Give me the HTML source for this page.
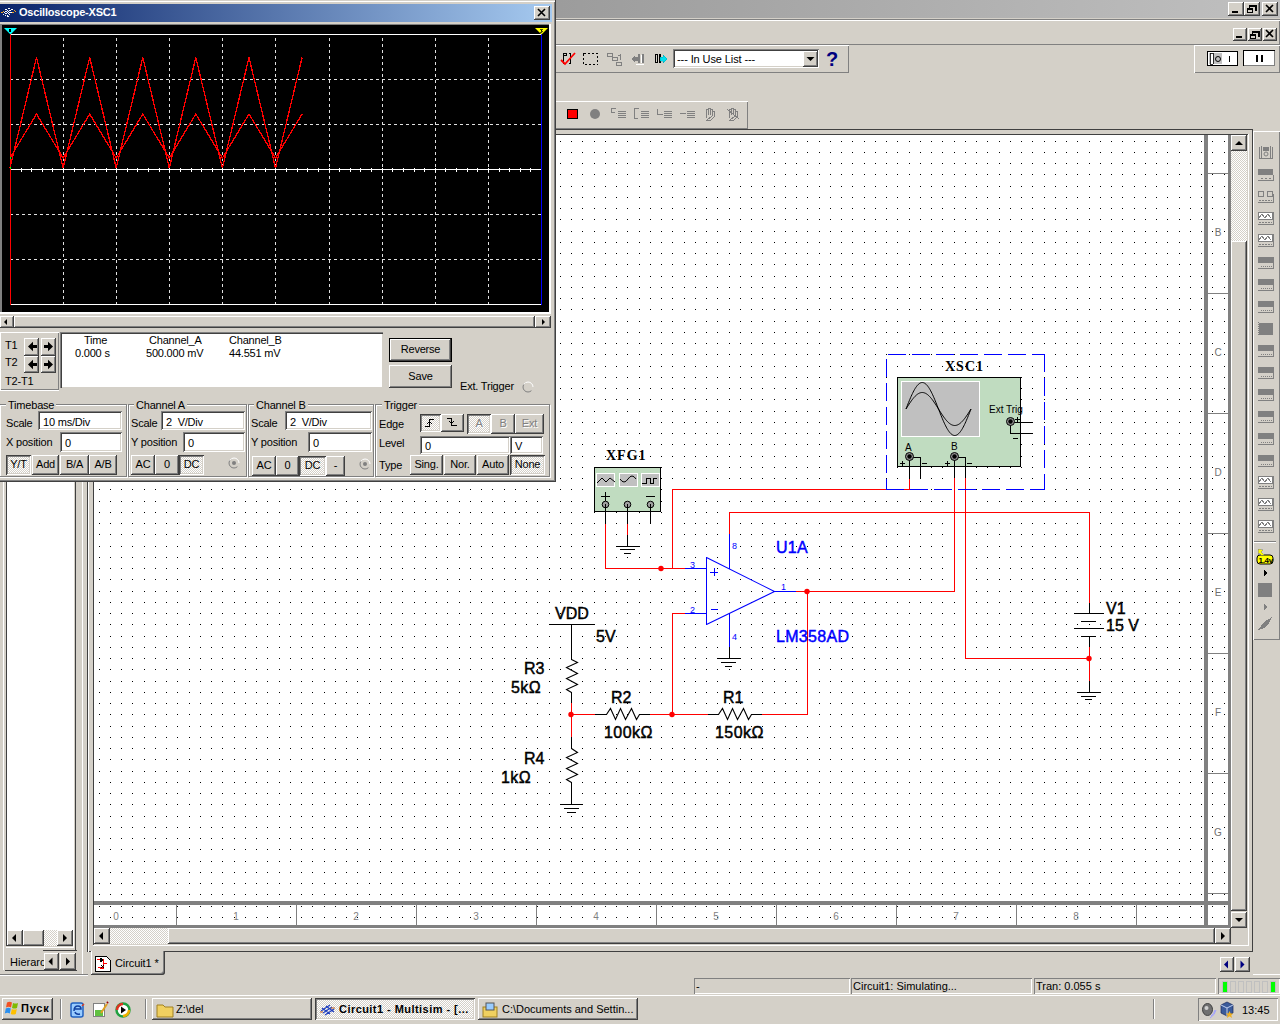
<!DOCTYPE html><html><head><meta charset="utf-8"><title>Multisim</title><style>
*{margin:0;padding:0;box-sizing:border-box}
html,body{width:1280px;height:1024px;overflow:hidden;background:#d4d0c8;font-family:"Liberation Sans",sans-serif;font-size:11px;color:#000;position:relative}
.a{position:absolute}
.bt{position:absolute;background:#d4d0c8;box-shadow:inset -1px -1px #404040,inset 1px 1px #fff,inset -2px -2px #808080;text-align:center;white-space:nowrap}
.bp{position:absolute;background:repeating-conic-gradient(#fff 0 25%,#d4d0c8 0 50%) 0 0/2px 2px;box-shadow:inset 1px 1px #404040,inset -1px -1px #fff,inset 2px 2px #808080,inset -2px -2px #d4d0c8;text-align:center;white-space:nowrap}
.ed{position:absolute;background:#fff;box-shadow:inset 1px 1px #808080,inset -1px -1px #fff,inset 2px 2px #404040,inset -2px -2px #d4d0c8;white-space:nowrap}
.sk{position:absolute;box-shadow:inset 1px 1px #808080,inset -1px -1px #fff}
.rs{position:absolute;box-shadow:inset 1px 1px #fff,inset -1px -1px #808080}
.dith{background:repeating-conic-gradient(#fff 0 25%,#d4d0c8 0 50%) 0 0/2px 2px}
.t{position:absolute;white-space:nowrap;line-height:1}
svg{position:absolute;overflow:visible}
</style></head><body>
<div class="a" style="left:0px;top:0px;width:1280px;height:18px;background:linear-gradient(90deg,#808080,#c0c0c0)"></div>
<div class="a" style="left:0px;top:19px;width:1280px;height:1px;background:#808080"></div>
<div class="a" style="left:0px;top:20px;width:1280px;height:1px;background:#fff"></div>
<div class="a" style="left:0px;top:44px;width:1280px;height:1px;background:#808080"></div>
<div class="a" style="left:1279px;top:21px;width:1px;height:52px;background:#808080"></div>
<div class="bt" style="left:1228px;top:2px;width:16px;height:14px"><div class="a" style="left:4px;top:9px;width:6px;height:2px;background:#000"></div></div>
<div class="bt" style="left:1244px;top:2px;width:16px;height:14px"><svg width="16" height="14" style="left:0;top:0" shape-rendering="crispEdges"><path d="M6 3h6v5h-1 M6 4h6" stroke="#000" fill="none"/><rect x="3.5" y="6.5" width="5" height="4" stroke="#000" fill="none"/><path d="M4 7.5h5" stroke="#000"/><path d="M5.5 3v2.5 M11.5 3v5.5" stroke="#000"/></svg></div>
<div class="bt" style="left:1262px;top:2px;width:16px;height:14px"><svg width="16" height="14" style="left:0;top:0"><path d="M4 3L11 10M11 3L4 10" stroke="#000" stroke-width="1.6"/></svg></div>
<div class="bt" style="left:1233px;top:28px;width:14px;height:13px"><div class="a" style="left:3px;top:8px;width:6px;height:2px;background:#000"></div></div>
<div class="bt" style="left:1248px;top:28px;width:14px;height:13px"><svg width="14" height="13" style="left:0;top:0" shape-rendering="crispEdges"><path d="M5 3h6v5h-1 M5 4h6" stroke="#000" fill="none"/><rect x="2.5" y="6.5" width="5" height="4" stroke="#000" fill="none"/><path d="M3 7.5h5" stroke="#000"/><path d="M4.5 3v2.5 M10.5 3v5.5" stroke="#000"/></svg></div>
<div class="bt" style="left:1263px;top:28px;width:14px;height:13px"><svg width="14" height="13" style="left:0;top:0"><path d="M3 2L10 9M10 2L3 9" stroke="#000" stroke-width="1.6"/></svg></div>
<div class="rs" style="left:540px;top:45px;width:309px;height:28px;"></div>
<div class="rs" style="left:1194px;top:45px;width:86px;height:28px;"></div>
<div class="rs" style="left:540px;top:101px;width:208px;height:28px;"></div>
<div class="ed" style="left:673px;top:49px;width:146px;height:19px;"><div class="t" style="left:4px;top:5px;font-size:11px;color:#000;letter-spacing:-0.1px">--- In Use List ---</div></div>
<div class="bt" style="left:803px;top:51px;width:15px;height:16px;"><svg width="15" height="16" style="left:0;top:0"><path d="M3.5 6h8l-4 4z" fill="#000"/></svg></div>
<div class="t" style="left:826px;top:49px;font-size:20px;color:#000080;font-weight:bold">?</div>
<svg width="300" height="30" style="left:550px;top:45px" shape-rendering="crispEdges">
<path d="M15.5 8h-2v10h2 M18.5 8h2v10h-2 M13 8h3v2h-3z" stroke="#000" fill="none"/>
<path d="M11 15l4 4l10-11" stroke="#f00" stroke-width="1.8" fill="none" shape-rendering="auto"/>
<rect x="33.5" y="8.5" width="14" height="11" stroke="#000" stroke-dasharray="2 2" fill="none"/>
<path d="M57.5 8.5h5v3h-5z M62.5 12.5h5v3h-5z M66.5 17.5h5v3h-5z M70 9v6 M68 10h2" stroke="#808080" fill="none"/>
<path d="M81 14l4-4v8z M85 12h4v4h-4z M88 9h2v9h-2z M92 9h2v9h-2z" fill="#808080"/>
<path d="M91 10v8 M86 19h8" stroke="#fff"/>
<path d="M105.5 9.5h2v8h-2z M109.5 9.5h1v8h-1z" stroke="#000" fill="none"/>
<path d="M110 12h3v-2l4 4l-4 4v-2h-3z" fill="#00e0f0" stroke="#008090" stroke-width="0.3"/>
</svg>
<svg width="200" height="30" style="left:550px;top:101px" shape-rendering="crispEdges">
<rect x="17.5" y="8.5" width="10" height="9" fill="#f00" stroke="#000"/>
<circle cx="45" cy="13" r="5" fill="#808080" shape-rendering="auto"/>
<g stroke="#808080" fill="none">
<path d="M61 7h5 M61 7v4h4 M68 10h8 M68 12h8 M68 14h8 M68 16h8"/>
<path d="M84 7h5 M84 7v10h4 M91 10h8 M91 12h8 M91 14h8 M91 16h8"/>
<path d="M107 8v5h6 M114 10h8 M114 12h8 M114 14h8 M114 16h8"/>
<path d="M130 12h6 M137 10h8 M137 12h8 M137 14h8 M137 16h8"/>
<path d="M156 17v-9h2v6 M158 14v-7h2v7 M160 14v-6h2v6 M162 15v-5h2v6l-3 3h-4z"/>
<path d="M179 17v-9h2v6 M181 14v-7h2v7 M183 14v-6h2v6 M185 15v-5h2v6l-3 3h-4z M177 8l12 10"/>
</g></svg>
<svg width="80" height="24" style="left:1200px;top:48px" shape-rendering="crispEdges">
<rect x="7.5" y="3.5" width="30" height="14" fill="#fff" stroke="#000"/>
<rect x="9" y="5" width="13" height="11" fill="#c0c0c0"/>
<path d="M10 16v-11h3v11z" fill="#fff" stroke="#000" stroke-width="0.8"/>
<circle cx="18" cy="11" r="2.5" fill="none" stroke="#000" shape-rendering="auto"/>
<path d="M29 8v6" stroke="#000" stroke-width="1"/>
<rect x="43.5" y="2.5" width="31" height="15" fill="#fff" stroke="#000"/>
<path d="M44 17h30v-14" stroke="#808080" fill="none"/>
<path d="M56 7v7 M57 7v7 M61 7v7 M62 7v7" stroke="#000"/>
</svg>
<div class="a" style="left:87px;top:129px;width:1166px;height:1px;background:#404040"></div>
<div class="a" style="left:87px;top:129px;width:1px;height:823px;background:#808080"></div>
<div class="a" style="left:88px;top:130px;width:1px;height:821px;background:#fff"></div>
<div class="a" style="left:87px;top:951px;width:1166px;height:1px;background:#404040"></div>
<div class="a" style="left:1252px;top:129px;width:1px;height:823px;background:#404040"></div>
<div class="a" style="left:93px;top:134px;width:1155px;height:1px;background:#404040"></div>
<div class="a" style="left:93px;top:134px;width:1px;height:811px;background:#404040"></div>
<div class="a" style="left:93px;top:945px;width:1156px;height:1px;background:#fff"></div>
<div class="a" style="left:1248px;top:134px;width:1px;height:812px;background:#fff"></div>
<svg width="1280" height="1024" style="left:0;top:0" shape-rendering="crispEdges" font-family="Liberation Sans, sans-serif"><defs><pattern id="dp" patternUnits="userSpaceOnUse" x="20" y="6" width="45" height="45"><rect x="0" y="0" width="1" height="1" fill="#000"/><rect x="0" y="11" width="1" height="1" fill="#000"/><rect x="0" y="22" width="1" height="1" fill="#000"/><rect x="0" y="33" width="1" height="1" fill="#000"/><rect x="11" y="0" width="1" height="1" fill="#000"/><rect x="11" y="11" width="1" height="1" fill="#000"/><rect x="11" y="22" width="1" height="1" fill="#000"/><rect x="11" y="33" width="1" height="1" fill="#000"/><rect x="22" y="0" width="1" height="1" fill="#000"/><rect x="22" y="11" width="1" height="1" fill="#000"/><rect x="22" y="22" width="1" height="1" fill="#000"/><rect x="22" y="33" width="1" height="1" fill="#000"/><rect x="34" y="0" width="1" height="1" fill="#000"/><rect x="34" y="11" width="1" height="1" fill="#000"/><rect x="34" y="22" width="1" height="1" fill="#000"/><rect x="34" y="33" width="1" height="1" fill="#000"/></pattern></defs><rect x="94" y="135" width="1110" height="766" fill="#fff"/><rect x="94" y="135" width="1110" height="766" fill="url(#dp)"/><rect x="1208" y="135" width="20" height="790" fill="#fff"/><rect x="1208" y="135" width="20" height="790" fill="url(#dp)"/><rect x="94" y="905" width="1110" height="20" fill="#fff"/><rect x="94" y="905" width="1110" height="20" fill="url(#dp)"/><rect x="1204" y="135" width="4" height="793" fill="#808080"/><rect x="94" y="901" width="1137" height="4" fill="#808080"/><rect x="1228" y="135" width="3" height="793" fill="#808080"/><rect x="94" y="925" width="1137" height="3" fill="#808080"/><rect x="1208" y="173" width="20" height="1" fill="#808080"/><rect x="1208" y="293" width="20" height="1" fill="#808080"/><rect x="1208" y="413" width="20" height="1" fill="#808080"/><rect x="1208" y="533" width="20" height="1" fill="#808080"/><rect x="1208" y="653" width="20" height="1" fill="#808080"/><rect x="1208" y="773" width="20" height="1" fill="#808080"/><rect x="1208" y="893" width="20" height="1" fill="#808080"/><text x="1218" y="236" font-size="10" fill="#707070" text-anchor="middle">B</text><text x="1218" y="356" font-size="10" fill="#707070" text-anchor="middle">C</text><text x="1218" y="476" font-size="10" fill="#707070" text-anchor="middle">D</text><text x="1218" y="596" font-size="10" fill="#707070" text-anchor="middle">E</text><text x="1218" y="716" font-size="10" fill="#707070" text-anchor="middle">F</text><text x="1218" y="836" font-size="10" fill="#707070" text-anchor="middle">G</text><rect x="176" y="905" width="1" height="20" fill="#808080"/><rect x="296" y="905" width="1" height="20" fill="#808080"/><rect x="416" y="905" width="1" height="20" fill="#808080"/><rect x="536" y="905" width="1" height="20" fill="#808080"/><rect x="656" y="905" width="1" height="20" fill="#808080"/><rect x="776" y="905" width="1" height="20" fill="#808080"/><rect x="896" y="905" width="1" height="20" fill="#808080"/><rect x="1016" y="905" width="1" height="20" fill="#808080"/><rect x="1136" y="905" width="1" height="20" fill="#808080"/><text x="116" y="920" font-size="10" fill="#808080" text-anchor="middle">0</text><text x="236" y="920" font-size="10" fill="#808080" text-anchor="middle">1</text><text x="356" y="920" font-size="10" fill="#808080" text-anchor="middle">2</text><text x="476" y="920" font-size="10" fill="#808080" text-anchor="middle">3</text><text x="596" y="920" font-size="10" fill="#808080" text-anchor="middle">4</text><text x="716" y="920" font-size="10" fill="#808080" text-anchor="middle">5</text><text x="836" y="920" font-size="10" fill="#808080" text-anchor="middle">6</text><text x="956" y="920" font-size="10" fill="#808080" text-anchor="middle">7</text><text x="1076" y="920" font-size="10" fill="#808080" text-anchor="middle">8</text><rect x="605" y="524" width="1" height="45" fill="#ff0000"/><rect x="605" y="568" width="80" height="1" fill="#ff0000"/><rect x="672" y="489" width="1" height="80" fill="#ff0000"/><rect x="672" y="489" width="238" height="1" fill="#ff0000"/><rect x="909" y="479" width="1" height="11" fill="#ff0000"/><rect x="627" y="524" width="1" height="11" fill="#ff0000"/><rect x="672" y="613" width="1" height="102" fill="#ff0000"/><rect x="672" y="613" width="13" height="1" fill="#ff0000"/><rect x="729" y="512" width="1" height="22" fill="#ff0000"/><rect x="729" y="512" width="361" height="1" fill="#ff0000"/><rect x="1089" y="512" width="1" height="91" fill="#ff0000"/><rect x="796" y="591" width="159" height="1" fill="#ff0000"/><rect x="954" y="478" width="1" height="114" fill="#ff0000"/><rect x="807" y="591" width="1" height="124" fill="#ff0000"/><rect x="762" y="714" width="46" height="1" fill="#ff0000"/><rect x="965" y="478" width="1" height="181" fill="#ff0000"/><rect x="965" y="658" width="125" height="1" fill="#ff0000"/><rect x="1089" y="647" width="1" height="34" fill="#ff0000"/><rect x="571" y="703" width="1" height="34" fill="#ff0000"/><rect x="571" y="714" width="24" height="1" fill="#ff0000"/><rect x="650" y="714" width="58" height="1" fill="#ff0000"/><path d="M888 354.5H1045" stroke="#0000ff" stroke-dasharray="18 6"/><path d="M886 489.5H1045" stroke="#0000ff" stroke-dasharray="18 6"/><path d="M886.5 359V490" stroke="#0000ff" stroke-dasharray="18 6"/><path d="M1044.5 354V490" stroke="#0000ff" stroke-dasharray="18 6"/><circle cx="661" cy="568.5" r="2.7" fill="#ff0000" shape-rendering="auto"/><circle cx="807" cy="591.5" r="2.7" fill="#ff0000" shape-rendering="auto"/><circle cx="571" cy="714.5" r="2.7" fill="#ff0000" shape-rendering="auto"/><circle cx="672" cy="714.5" r="2.7" fill="#ff0000" shape-rendering="auto"/><circle cx="1089" cy="658.5" r="2.7" fill="#ff0000" shape-rendering="auto"/><path d="M706.5 557.5 L774.5 591.5 L706.5 624.5" stroke="#0000ff" fill="none" shape-rendering="auto" stroke-width="1.1"/><rect x="706" y="557" width="1" height="68" fill="#0000ff"/><rect x="685" y="568" width="22" height="1" fill="#0000ff"/><rect x="685" y="613" width="22" height="1" fill="#0000ff"/><rect x="775" y="591" width="21" height="1" fill="#0000ff"/><rect x="729" y="534" width="1" height="35" fill="#0000ff"/><rect x="729" y="614" width="1" height="33" fill="#0000ff"/><rect x="710" y="572" width="8" height="1" fill="#0000ff"/><rect x="714" y="568" width="1" height="8" fill="#0000ff"/><rect x="711" y="609" width="7" height="1" fill="#0000ff"/><text x="690" y="568" font-size="9" fill="#0000ff">3</text><text x="690" y="613" font-size="9" fill="#0000ff">2</text><text x="732" y="549" font-size="9" fill="#0000ff">8</text><text x="732" y="640" font-size="9" fill="#0000ff">4</text><text x="781" y="590" font-size="9" fill="#0000ff">1</text><text x="776" y="553" font-size="16" fill="#0000ff" stroke="#0000ff" stroke-width="0.45" letter-spacing="0.3">U1A</text><text x="776" y="642" font-size="16" fill="#0000ff" stroke="#0000ff" stroke-width="0.45" letter-spacing="0.3">LM358AD</text><rect x="729" y="647" width="1" height="12" fill="#000"/><rect x="717" y="658" width="24" height="1" fill="#000"/><rect x="721" y="662" width="15" height="1" fill="#000"/><rect x="725" y="666" width="7" height="1" fill="#000"/><rect x="627" y="535" width="1" height="12" fill="#000"/><rect x="616" y="546" width="24" height="1" fill="#000"/><rect x="620" y="549" width="15" height="1" fill="#000"/><rect x="624" y="553" width="7" height="1" fill="#000"/><rect x="571" y="782" width="1" height="23" fill="#000"/><rect x="560" y="804" width="23" height="1" fill="#000"/><rect x="564" y="808" width="15" height="1" fill="#000"/><rect x="567" y="812" width="9" height="1" fill="#000"/><rect x="1089" y="681" width="1" height="12" fill="#000"/><rect x="1077" y="692" width="24" height="1" fill="#000"/><rect x="1081" y="696" width="15" height="1" fill="#000"/><rect x="1085" y="699" width="7" height="1" fill="#000"/><rect x="605" y="504" width="1" height="20" fill="#000"/><rect x="627" y="504" width="1" height="20" fill="#000"/><rect x="650" y="504" width="1" height="20" fill="#000"/><rect x="549" y="624" width="46" height="1" fill="#000"/><rect x="571" y="624" width="1" height="36" fill="#000"/><rect x="571" y="692" width="1" height="11" fill="#000"/><path d="M571.5 659.5 L577.5 662.5 L566.5 667.5 L577.5 673.5 L566.5 678.5 L577.5 684.5 L566.5 689.5 L571.5 692.5" stroke="#000" fill="none" shape-rendering="auto" stroke-width="1.1"/><rect x="571" y="737" width="1" height="12" fill="#000"/><path d="M571.5 748.5 L577.5 752.5 L566.5 757.5 L577.5 763.5 L566.5 768.5 L577.5 774.5 L566.5 779.5 L571.5 782.5" stroke="#000" fill="none" shape-rendering="auto" stroke-width="1.1"/><rect x="595" y="714" width="12" height="1" fill="#000"/><rect x="639" y="714" width="11" height="1" fill="#000"/><path d="M606.5 714.5 L610.5 708.5 L615.5 719.5 L620.5 708.5 L625.5 719.5 L631.5 708.5 L636.5 719.5 L639.5 714.5" stroke="#000" fill="none" shape-rendering="auto" stroke-width="1.1"/><rect x="708" y="714" width="11" height="1" fill="#000"/><rect x="751" y="714" width="11" height="1" fill="#000"/><path d="M718.5 714.5 L722.5 708.5 L727.5 719.5 L732.5 708.5 L737.5 719.5 L743.5 708.5 L748.5 719.5 L751.5 714.5" stroke="#000" fill="none" shape-rendering="auto" stroke-width="1.1"/><rect x="1089" y="603" width="1" height="11" fill="#000"/><rect x="1074" y="613" width="30" height="1" fill="#000"/><rect x="1081" y="621" width="15" height="1" fill="#000"/><rect x="1074" y="628" width="30" height="1" fill="#000"/><rect x="1081" y="636" width="15" height="1" fill="#000"/><rect x="1089" y="636" width="1" height="11" fill="#000"/><text x="555" y="619" font-size="16" fill="#000" stroke="#000" stroke-width="0.45">VDD</text><text x="596" y="642" font-size="16" fill="#000" stroke="#000" stroke-width="0.45">5V</text><text x="524" y="674" font-size="16" fill="#000" stroke="#000" stroke-width="0.45">R3</text><text x="511" y="693" font-size="16" fill="#000" stroke="#000" stroke-width="0.45" letter-spacing="0.45">5kΩ</text><text x="611" y="703" font-size="16" fill="#000" stroke="#000" stroke-width="0.45">R2</text><text x="604" y="738" font-size="16" fill="#000" stroke="#000" stroke-width="0.45" letter-spacing="0.45">100kΩ</text><text x="723" y="703" font-size="16" fill="#000" stroke="#000" stroke-width="0.45">R1</text><text x="715" y="738" font-size="16" fill="#000" stroke="#000" stroke-width="0.45" letter-spacing="0.45">150kΩ</text><text x="524" y="764" font-size="16" fill="#000" stroke="#000" stroke-width="0.45">R4</text><text x="501" y="783" font-size="16" fill="#000" stroke="#000" stroke-width="0.45" letter-spacing="0.45">1kΩ</text><text x="1106" y="614" font-size="16" fill="#000" stroke="#000" stroke-width="0.45">V1</text><text x="1106" y="631" font-size="16" fill="#000" stroke="#000" stroke-width="0.45">15 V</text><rect x="594.5" y="467.5" width="66" height="44" fill="#c0dcc0" stroke="#000"/><rect x="596" y="473" width="19" height="14" fill="#fff"/><rect x="597" y="474" width="17" height="12" fill="#c0c0c0"/><rect x="619" y="473" width="19" height="14" fill="#fff"/><rect x="620" y="474" width="17" height="12" fill="#c0c0c0"/><rect x="641" y="473" width="19" height="14" fill="#fff"/><rect x="642" y="474" width="17" height="12" fill="#c0c0c0"/><path d="M597 483l5-5l4 4l4-4l5 4" stroke="#000" fill="none" shape-rendering="auto"/><path d="M620 479q4 6 8 0t8 0" stroke="#000" fill="none" shape-rendering="auto"/><path d="M642 483h4v-5h4v5h3v-5h4" stroke="#000" fill="none"/><rect x="601" y="496" width="9" height="1" fill="#000"/><rect x="605" y="492" width="1" height="9" fill="#000"/><rect x="646" y="496" width="9" height="1" fill="#000"/><circle cx="605.5" cy="504.5" r="3.3" fill="#a0a0a0" stroke="#000" shape-rendering="auto"/><circle cx="627.5" cy="504.5" r="3.3" fill="#a0a0a0" stroke="#000" shape-rendering="auto"/><circle cx="650.5" cy="504.5" r="3.3" fill="#a0a0a0" stroke="#000" shape-rendering="auto"/><rect x="605" y="504" width="1" height="8" fill="#000"/><rect x="627" y="504" width="1" height="8" fill="#000"/><rect x="650" y="504" width="1" height="8" fill="#000"/><text x="606" y="460" font-size="14" font-weight="bold" letter-spacing="1" font-family="Liberation Serif, serif" fill="#000">XFG1</text><rect x="897.5" y="377.5" width="123" height="89" fill="#c0dcc0" stroke="#000"/><rect x="901" y="381" width="79" height="56" fill="#fff"/><rect x="902" y="382" width="77" height="54" fill="#c0c0c0"/><path d="M906.00 409.00 L906.65 407.34 L907.30 405.68 L907.95 404.03 L908.60 402.41 L909.25 400.81 L909.90 399.24 L910.55 397.72 L911.20 396.23 L911.85 394.80 L912.50 393.42 L913.15 392.11 L913.80 390.86 L914.45 389.68 L915.10 388.58 L915.75 387.56 L916.40 386.63 L917.05 385.78 L917.70 385.02 L918.35 384.36 L919.00 383.80 L919.65 383.33 L920.30 382.97 L920.95 382.71 L921.60 382.55 L922.25 382.50 L922.90 382.55 L923.55 382.71 L924.20 382.97 L924.85 383.33 L925.50 383.80 L926.15 384.36 L926.80 385.02 L927.45 385.78 L928.10 386.63 L928.75 387.56 L929.40 388.58 L930.05 389.68 L930.70 390.86 L931.35 392.11 L932.00 393.42 L932.65 394.80 L933.30 396.23 L933.95 397.72 L934.60 399.24 L935.25 400.81 L935.90 402.41 L936.55 404.03 L937.20 405.68 L937.85 407.34 L938.50 409.00 L939.15 410.66 L939.80 412.32 L940.45 413.97 L941.10 415.59 L941.75 417.19 L942.40 418.76 L943.05 420.28 L943.70 421.77 L944.35 423.20 L945.00 424.58 L945.65 425.89 L946.30 427.14 L946.95 428.32 L947.60 429.42 L948.25 430.44 L948.90 431.37 L949.55 432.22 L950.20 432.98 L950.85 433.64 L951.50 434.20 L952.15 434.67 L952.80 435.03 L953.45 435.29 L954.10 435.45 L954.75 435.50 L955.40 435.45 L956.05 435.29 L956.70 435.03 L957.35 434.67 L958.00 434.20 L958.65 433.64 L959.30 432.98 L959.95 432.22 L960.60 431.37 L961.25 430.44 L961.90 429.42 L962.55 428.32 L963.20 427.14 L963.85 425.89 L964.50 424.58 L965.15 423.20 L965.80 421.77 L966.45 420.28 L967.10 418.76 L967.75 417.19 L968.40 415.59 L969.05 413.97 L969.70 412.32 L970.35 410.66 L971.00 409.00" stroke="#000" fill="none" shape-rendering="auto"/><path d="M906.00 409.00 L906.65 407.96 L907.30 406.93 L907.95 405.91 L908.60 404.90 L909.25 403.90 L909.90 402.93 L910.55 401.97 L911.20 401.05 L911.85 400.16 L912.50 399.30 L913.15 398.48 L913.80 397.70 L914.45 396.97 L915.10 396.29 L915.75 395.65 L916.40 395.07 L917.05 394.54 L917.70 394.07 L918.35 393.66 L919.00 393.31 L919.65 393.02 L920.30 392.79 L920.95 392.63 L921.60 392.53 L922.25 392.50 L922.90 392.53 L923.55 392.63 L924.20 392.79 L924.85 393.02 L925.50 393.31 L926.15 393.66 L926.80 394.07 L927.45 394.54 L928.10 395.07 L928.75 395.65 L929.40 396.29 L930.05 396.97 L930.70 397.70 L931.35 398.48 L932.00 399.30 L932.65 400.16 L933.30 401.05 L933.95 401.97 L934.60 402.93 L935.25 403.90 L935.90 404.90 L936.55 405.91 L937.20 406.93 L937.85 407.96 L938.50 409.00 L939.15 410.04 L939.80 411.07 L940.45 412.09 L941.10 413.10 L941.75 414.10 L942.40 415.07 L943.05 416.03 L943.70 416.95 L944.35 417.84 L945.00 418.70 L945.65 419.52 L946.30 420.30 L946.95 421.03 L947.60 421.71 L948.25 422.35 L948.90 422.93 L949.55 423.46 L950.20 423.93 L950.85 424.34 L951.50 424.69 L952.15 424.98 L952.80 425.21 L953.45 425.37 L954.10 425.47 L954.75 425.50 L955.40 425.47 L956.05 425.37 L956.70 425.21 L957.35 424.98 L958.00 424.69 L958.65 424.34 L959.30 423.93 L959.95 423.46 L960.60 422.93 L961.25 422.35 L961.90 421.71 L962.55 421.03 L963.20 420.30 L963.85 419.52 L964.50 418.70 L965.15 417.84 L965.80 416.95 L966.45 416.03 L967.10 415.07 L967.75 414.10 L968.40 413.10 L969.05 412.09 L969.70 411.07 L970.35 410.04 L971.00 409.00" stroke="#000" fill="none" shape-rendering="auto"/><text x="945" y="371" font-size="14" font-weight="bold" letter-spacing="1" font-family="Liberation Serif, serif" fill="#000">XSC1</text><text x="989" y="413" font-size="10" fill="#000">Ext Trig</text><text x="905" y="451" font-size="10" fill="#000">A</text><text x="951" y="450" font-size="10" fill="#000">B</text><rect x="909" y="456" width="1" height="23" fill="#000"/><rect x="909" y="457" width="12" height="1" fill="#000"/><rect x="920" y="457" width="1" height="22" fill="#000"/><rect x="954" y="456" width="1" height="22" fill="#000"/><rect x="954" y="457" width="12" height="1" fill="#000"/><rect x="965" y="457" width="1" height="21" fill="#000"/><rect x="1010" y="422" width="23" height="1" fill="#000"/><rect x="1010" y="422" width="1" height="12" fill="#000"/><rect x="1010" y="433" width="23" height="1" fill="#000"/><circle cx="909.5" cy="456.5" r="4" fill="#909090" stroke="#000" shape-rendering="auto"/><circle cx="909.5" cy="456.5" r="2.2" fill="#000" shape-rendering="auto"/><circle cx="954.5" cy="456.5" r="4" fill="#909090" stroke="#000" shape-rendering="auto"/><circle cx="954.5" cy="456.5" r="2.2" fill="#000" shape-rendering="auto"/><circle cx="1010.5" cy="421.5" r="4" fill="#909090" stroke="#000" shape-rendering="auto"/><circle cx="1010.5" cy="421.5" r="2.2" fill="#000" shape-rendering="auto"/><rect x="900" y="463" width="5" height="1" fill="#000"/><rect x="902" y="461" width="1" height="5" fill="#000"/><rect x="922" y="463" width="5" height="1" fill="#000"/><rect x="945" y="463" width="5" height="1" fill="#000"/><rect x="947" y="461" width="1" height="5" fill="#000"/><rect x="967" y="463" width="5" height="1" fill="#000"/><rect x="1015" y="419" width="5" height="1" fill="#000"/><rect x="1017" y="417" width="1" height="5" fill="#000"/><rect x="1013" y="438" width="5" height="1" fill="#000"/></svg>
<div class="a" style="left:1231px;top:135px;width:17px;height:793px;background:#d4d0c8"></div>
<div class="a" style="left:1231px;top:151px;width:16px;height:90px;background:repeating-conic-gradient(#fff 0 25%,#d4d0c8 0 50%) 0 0/2px 2px"></div>
<div class="bt" style="left:1231px;top:241px;width:16px;height:670px;"></div>
<div class="bt" style="left:1231px;top:135px;width:16px;height:16px"><svg width="16" height="16" style="left:0;top:0"><path d="M4.0 10.0h8l-4-4z" fill="#000"/></svg></div>
<div class="bt" style="left:1231px;top:912px;width:16px;height:16px"><svg width="16" height="16" style="left:0;top:0"><path d="M4.0 6.0h8l-4 4z" fill="#000"/></svg></div>
<div class="a" style="left:94px;top:928px;width:1137px;height:16px;background:#d4d0c8"></div>
<div class="a" style="left:110px;top:928px;width:58px;height:16px;background:repeating-conic-gradient(#fff 0 25%,#d4d0c8 0 50%) 0 0/2px 2px"></div>
<div class="bt" style="left:168px;top:928px;width:1047px;height:16px;"></div>
<div class="bt" style="left:94px;top:928px;width:16px;height:16px"><svg width="16" height="16" style="left:0;top:0"><path d="M9.0 4.0v8l-4-4z" fill="#000"/></svg></div>
<div class="bt" style="left:1215px;top:928px;width:16px;height:16px"><svg width="16" height="16" style="left:0;top:0"><path d="M6.0 4.0v8l4-4z" fill="#000"/></svg></div>
<div class="rs" style="left:1253px;top:131px;width:27px;height:509px;"></div>
<svg width="1280" height="1024" style="left:0;top:0" shape-rendering="crispEdges"><path d="M1259.5 147v11h13v-11 M1261.5 146v12 M1270.5 146v12" stroke="#808080" fill="none"/><rect x="1263" y="147" width="6" height="4" fill="#808080"/><circle cx="1266" cy="154" r="2" fill="none" stroke="#808080" shape-rendering="auto"/><rect x="1258" y="169" width="15" height="6" fill="#808080"/><path d="M1258 180.5h15 M1273.5 175v6" stroke="#808080"/><path d="M1261 178.5h11" stroke="#808080" stroke-dasharray="2 2"/><rect x="1258.5" y="191.5" width="5" height="5" fill="none" stroke="#808080"/><rect x="1267.5" y="191.5" width="5" height="5" fill="none" stroke="#808080"/><path d="M1258 202.5h15 M1273.5 194v9" stroke="#808080"/><path d="M1259 200.5h13" stroke="#808080" stroke-dasharray="2 1"/><rect x="1258.5" y="212.5" width="14" height="7" fill="#fff" stroke="#808080"/><path d="M1259 218l3-4l3 4l3-4l3 4" stroke="#808080" fill="none"/><path d="M1258 224.5h15 M1273.5 212v13" stroke="#808080"/><path d="M1259 222.5h13" stroke="#808080" stroke-dasharray="2 1"/><rect x="1258.5" y="234.5" width="14" height="7" fill="#fff" stroke="#808080"/><path d="M1259 240l3-4l3 4l3-4l3 4" stroke="#808080" fill="none"/><path d="M1258 246.5h15 M1273.5 234v13" stroke="#808080"/><path d="M1259 244.5h13" stroke="#808080" stroke-dasharray="2 1"/><rect x="1258" y="257" width="15" height="6" fill="#808080"/><path d="M1258 268.5h15 M1273.5 257v12" stroke="#808080"/><path d="M1261 266.5h11" stroke="#808080" stroke-dasharray="1 1"/><rect x="1258" y="279" width="15" height="6" fill="#808080"/><path d="M1258 290.5h15 M1273.5 279v12" stroke="#808080"/><path d="M1261 288.5h11" stroke="#808080" stroke-dasharray="1 1"/><rect x="1258" y="301" width="15" height="6" fill="#808080"/><path d="M1258 312.5h15 M1273.5 301v12" stroke="#808080"/><path d="M1261 310.5h11" stroke="#808080" stroke-dasharray="1 1"/><rect x="1259" y="323" width="14" height="12" fill="#808080"/><path d="M1258.5 322v13" stroke="#808080" stroke-dasharray="1 1"/><rect x="1258" y="345" width="15" height="6" fill="#808080"/><path d="M1258 356.5h15 M1273.5 345v12" stroke="#808080"/><path d="M1261 354.5h11" stroke="#808080" stroke-dasharray="1 1"/><rect x="1258" y="367" width="15" height="6" fill="#808080"/><path d="M1258 378.5h15 M1273.5 367v12" stroke="#808080"/><path d="M1261 376.5h11" stroke="#808080" stroke-dasharray="1 1"/><rect x="1258" y="389" width="15" height="6" fill="#808080"/><path d="M1258 400.5h15 M1273.5 389v12" stroke="#808080"/><path d="M1261 398.5h11" stroke="#808080" stroke-dasharray="1 1"/><rect x="1258" y="411" width="15" height="6" fill="#808080"/><path d="M1258 422.5h15 M1273.5 411v12" stroke="#808080"/><path d="M1261 420.5h11" stroke="#808080" stroke-dasharray="1 1"/><rect x="1258" y="433" width="15" height="6" fill="#808080"/><path d="M1258 444.5h15 M1273.5 433v12" stroke="#808080"/><path d="M1261 442.5h11" stroke="#808080" stroke-dasharray="1 1"/><rect x="1258" y="455" width="15" height="6" fill="#808080"/><path d="M1258 466.5h15 M1273.5 455v12" stroke="#808080"/><path d="M1261 464.5h11" stroke="#808080" stroke-dasharray="1 1"/><rect x="1258.5" y="476.5" width="14" height="7" fill="#fff" stroke="#808080"/><path d="M1259 482l3-4l3 4l3-4l3 4" stroke="#808080" fill="none"/><path d="M1258 488.5h15 M1273.5 476v13" stroke="#808080"/><path d="M1259 486.5h13" stroke="#808080" stroke-dasharray="2 1"/><rect x="1258.5" y="498.5" width="14" height="7" fill="#fff" stroke="#808080"/><path d="M1259 504l3-4l3 4l3-4l3 4" stroke="#808080" fill="none"/><path d="M1258 510.5h15 M1273.5 498v13" stroke="#808080"/><path d="M1259 508.5h13" stroke="#808080" stroke-dasharray="2 1"/><rect x="1258.5" y="520.5" width="14" height="7" fill="#fff" stroke="#808080"/><path d="M1259 526l3-4l3 4l3-4l3 4" stroke="#808080" fill="none"/><path d="M1258 532.5h15 M1273.5 520v13" stroke="#808080"/><path d="M1259 530.5h13" stroke="#808080" stroke-dasharray="2 1"/><path d="M1254 541.5h22" stroke="#808080"/><path d="M1254 542.5h22" stroke="#fff"/><rect x="1257" y="555" width="16" height="9" rx="3" fill="#ffff00" stroke="#000" shape-rendering="auto"/><path d="M1258 549l5 1l-2 2l3 3h-3l-2-2l-1 2z" fill="#ffff00" stroke="#808080" stroke-width="0.5"/><text x="1258.5" y="562.5" font-size="8" font-weight="bold" fill="#000" font-family="Liberation Sans, sans-serif" letter-spacing="-0.3">1.4v</text><path d="M1264 570v6l3-3z" fill="#000"/><rect x="1258" y="583" width="14" height="14" fill="#808080"/><path d="M1264 604v6l3-3z" fill="#808080"/><path d="M1258 630l6-8l8-5l-3 6l-4 5z" fill="#808080"/></svg>
<div class="a" style="left:7px;top:482px;width:65px;height:448px;background:#fff"></div>
<div class="a" style="left:6px;top:482px;width:1px;height:464px;background:#404040"></div>
<div class="a" style="left:72px;top:482px;width:1px;height:464px;background:#fff"></div>
<div class="a" style="left:75px;top:482px;width:1px;height:469px;background:#404040"></div>
<div class="a" style="left:82px;top:482px;width:1px;height:492px;background:#fff"></div>
<div class="a" style="left:87px;top:482px;width:1px;height:470px;background:#404040"></div>
<div class="a" style="left:88px;top:482px;width:1px;height:470px;background:#fff"></div>
<div class="a" style="left:6px;top:947px;width:68px;height:1px;background:#fff"></div><div class="a" style="left:73px;top:482px;width:1px;height:466px;background:#fff"></div><div class="a" style="left:3px;top:482px;width:1px;height:488px;background:#fff"></div>
<div class="a" style="left:43px;top:950px;width:34px;height:1px;background:#404040"></div>
<div class="bt" style="left:7px;top:930px;width:16px;height:16px"><svg width="16" height="16" style="left:0;top:0"><path d="M9.0 4.0v8l-4-4z" fill="#000"/></svg></div>
<div class="bt" style="left:23px;top:930px;width:21px;height:16px;"></div>
<div class="a" style="left:44px;top:930px;width:13px;height:16px;background:repeating-conic-gradient(#fff 0 25%,#d4d0c8 0 50%) 0 0/2px 2px"></div>
<div class="bt" style="left:57px;top:930px;width:16px;height:16px"><svg width="16" height="16" style="left:0;top:0"><path d="M6.0 4.0v8l4-4z" fill="#000"/></svg></div>
<div class="t" style="left:10px;top:957px;font-size:11px;color:#000;">Hierarc</div>
<div class="bt" style="left:44px;top:953px;width:15px;height:17px"><svg width="15" height="17" style="left:0;top:0"><path d="M8.5 4.5v8l-4-4z" fill="#000"/></svg></div>
<div class="bt" style="left:60px;top:953px;width:16px;height:17px"><svg width="16" height="17" style="left:0;top:0"><path d="M6.0 4.5v8l4-4z" fill="#000"/></svg></div>
<div class="a" style="left:5px;top:970px;width:72px;height:1px;background:#404040"></div>
<div class="a" style="left:0px;top:974px;width:88px;height:1px;background:#808080"></div><div class="a" style="left:0px;top:975px;width:88px;height:1px;background:#fff"></div>
<div class="a" style="left:91px;top:951px;width:74px;height:24px;background:#d4d0c8;box-shadow:inset -1px -1px #404040,inset 1px 0 #fff,inset -2px -2px #808080;border-bottom-right-radius:3px"></div>
<svg width="20" height="20" style="left:94px;top:955px" shape-rendering="crispEdges">
<path d="M1.5 1.5h11l4 4v11h-15z" fill="#fff" stroke="#000"/>
<path d="M3 4h6v9h-3 M9 8h4 M4 12h6" stroke="#f00" fill="none"/>
<path d="M6 3v4l3-2z M7 10l3 3 M10 10l-3 3" stroke="#000" fill="none"/>
</svg>
<div class="t" style="left:115px;top:958px;font-size:11px;color:#000;letter-spacing:-0.1px">Circuit1 *</div>
<div class="bt" style="left:1220px;top:957px;width:14px;height:15px"><svg width="14" height="15" style="left:0;top:0"><path d="M8.0 3.5v8l-4-4z" fill="#000080"/></svg></div>
<div class="bt" style="left:1235px;top:957px;width:15px;height:15px"><svg width="15" height="15" style="left:0;top:0"><path d="M5.5 3.5v8l4-4z" fill="#000080"/></svg></div>
<div class="a" style="left:1253px;top:974px;width:27px;height:1px;background:#fff"></div>
<div class="sk" style="left:694px;top:978px;width:156px;height:16px;"><div class="t" style="left:2px;top:3px;font-size:11px;color:#000;">-</div></div>
<div class="sk" style="left:851px;top:978px;width:181px;height:16px;"><div class="t" style="left:2px;top:3px;font-size:11px;color:#000;">Circuit1: Simulating...</div></div>
<div class="sk" style="left:1034px;top:978px;width:182px;height:16px;"><div class="t" style="left:2px;top:3px;font-size:11px;color:#000;">Tran: 0.055 s</div></div>
<div class="sk" style="left:1218px;top:978px;width:62px;height:16px;"></div>
<svg width="1280" height="1024" style="left:0;top:0" shape-rendering="crispEdges"><rect x="1222.5" y="981.5" width="5" height="11" fill="#00ff00" stroke="#c0c0c0"/><rect x="1230.5" y="981.5" width="5" height="11" fill="#d4d0c8" stroke="#c0c0c0"/><rect x="1238.5" y="981.5" width="5" height="11" fill="#d4d0c8" stroke="#c0c0c0"/><rect x="1246.5" y="981.5" width="5" height="11" fill="#d4d0c8" stroke="#c0c0c0"/><rect x="1254.5" y="981.5" width="5" height="11" fill="#d4d0c8" stroke="#c0c0c0"/><rect x="1262.5" y="981.5" width="5" height="11" fill="#d4d0c8" stroke="#c0c0c0"/><rect x="1270.5" y="981.5" width="5" height="11" fill="#00ff00" stroke="#c0c0c0"/></svg>
<div class="a" style="left:0px;top:995px;width:1280px;height:1px;background:#fff"></div>
<div class="bt" style="left:2px;top:998px;width:51px;height:22px;"><div class="t" style="left:19px;top:5px;font-size:11px;color:#000;font-weight:bold;letter-spacing:0.8px">Пуск</div></div>
<svg width="20" height="20" style="left:3px;top:1000px">
<path d="M4 2.5q2.5-1.5 5 0l-1 5q-2.5-1.5-5 0z" fill="#f25022"/><path d="M10 3q2.5 1 5 0l-1 5q-2.5 1-5 0z" fill="#7fba00"/>
<path d="M2.8 8.5q2.5-1.5 5 0l-1 5q-2.5-1.5-5 0z" fill="#2a8fef"/><path d="M8.8 9q2.5 1 5 0l-1 5q-2.5 1-5 0z" fill="#ffc000"/></svg>
<div class="a" style="left:60px;top:999px;width:1px;height:20px;background:#808080"></div><div class="a" style="left:61px;top:999px;width:1px;height:20px;background:#fff"></div>
<div class="a" style="left:145px;top:999px;width:1px;height:20px;background:#808080"></div><div class="a" style="left:146px;top:999px;width:1px;height:20px;background:#fff"></div>
<svg width="80" height="20" style="left:66px;top:1000px">
<rect x="5" y="3" width="12" height="14" rx="2" fill="#9cf" stroke="#2060c0" stroke-width="1.5"/><path d="M8 11q0-5 4-5q3 0 3 3h-6 M9 12q1 3 5 2" stroke="#1040a0" stroke-width="1.5" fill="none"/><path d="M16 6l2-2" stroke="#e04020" stroke-width="1.5"/>
<rect x="27.5" y="3.5" width="11" height="13" fill="#fff" stroke="#808080"/><rect x="29" y="10" width="8" height="6" fill="#60c040"/><path d="M35 13l6-9" stroke="#e0a020" stroke-width="2"/><path d="M41 3l1-1" stroke="#a00000" stroke-width="2"/>
<circle cx="57" cy="10" r="6.5" fill="#fff" stroke="#20a040" stroke-width="2.5"/><path d="M51 10a6 6 0 0 1 6-6" stroke="#e03020" stroke-width="2.5" fill="none"/><path d="M57 16a6 6 0 0 0 6-6" stroke="#f0b000" stroke-width="2.5" fill="none"/><path d="M55 6.5v7l5-3.5z" fill="#000"/>
</svg>
<div class="bt" style="left:152px;top:998px;width:160px;height:22px;"><div class="t" style="left:24px;top:6px;font-size:11px;color:#000;">Z:\del</div></div>
<svg width="20" height="16" style="left:156px;top:1002px"><path d="M1 3h6l2 2h8v10h-16z" fill="#f0d060" stroke="#a08020"/></svg>
<div class="bp" style="left:315px;top:998px;width:160px;height:22px;"><div class="t" style="left:24px;top:6px;font-size:11px;color:#000;font-weight:bold;letter-spacing:0.45px">Circuit1 - Multisim - [...</div></div>
<svg width="20" height="16" style="left:319px;top:1002px"><path d="M2 9l9-6 M4 11l9-6 M6 13l9-6 M3 6l8 6 M7 4l8 6" stroke="#2040c0" stroke-width="1.2" fill="none"/><path d="M1 10h3 M12 6h4" stroke="#c06020" stroke-width="1"/></svg>
<div class="bt" style="left:478px;top:998px;width:160px;height:22px;"><div class="t" style="left:24px;top:6px;font-size:11px;color:#000;">C:\Documents and Settin...</div></div>
<svg width="20" height="18" style="left:481px;top:1001px"><rect x="2" y="6" width="14" height="10" fill="#f0d060" stroke="#a08020"/><rect x="5" y="2" width="8" height="7" fill="#9cf" stroke="#555"/></svg>
<div class="a" style="left:1153px;top:999px;width:1px;height:20px;background:#808080"></div><div class="a" style="left:1154px;top:999px;width:1px;height:20px;background:#fff"></div>
<div class="sk" style="left:1198px;top:998px;width:80px;height:23px;"></div>
<svg width="40" height="22" style="left:1200px;top:1000px"><path d="M4 9a2 3 0 0 1 2-4" stroke="#8080ff" fill="none"/><ellipse cx="7.5" cy="9.5" rx="5" ry="6" fill="#707070" stroke="#404040"/><circle cx="6.5" cy="8" r="2" fill="#d0d0d0"/><path d="M11 16q3-2 4-6 M10 18q5-3 6-8" stroke="#a0a0ff" fill="none"/><path d="M21 5l6-3l6 3v8l-6 3l-6-3z" fill="#3a5a9a" stroke="#1a2a5a" stroke-width="0.7"/><path d="M21 5l6 3l6-3 M27 8v8" stroke="#c0d0f0" stroke-width="1" fill="none"/><path d="M29.5 11l1.2 2.5h2.6l-2 1.7l.8 2.7l-2.6-1.6l-2.6 1.6l.8-2.7l-2-1.7h2.6z" fill="#f0b020"/></svg>
<div class="t" style="left:1242px;top:1005px;font-size:11px;color:#000;">13:45</div>
<div class="a" style="left:0;top:0;width:556px;height:482px;letter-spacing:-0.2px"><div class="a" style="left:0;top:0;width:556px;height:482px;background:#d4d0c8;box-shadow:inset -1px -1px #404040,inset 0 1px #d4d0c8,inset 0 2px #fff,inset -2px -2px #808080"></div><div class="a" style="left:0px;top:4px;width:552px;height:18px;background:linear-gradient(90deg,#0a246a,#a6caf0)"></div><svg width="18" height="20" style="left:0;top:0"><rect x="5" y="9" width="1" height="1" fill="#fff"/><rect x="6" y="9" width="1" height="1" fill="#fff"/><rect x="8" y="8" width="1" height="1" fill="#fff"/><rect x="9" y="8" width="1" height="1" fill="#fff"/><rect x="11" y="9" width="1" height="1" fill="#fff"/><rect x="12" y="9" width="1" height="1" fill="#fff"/><rect x="7" y="10" width="1" height="1" fill="#fff"/><rect x="9" y="10" width="1" height="1" fill="#fff"/><rect x="10" y="10" width="1" height="1" fill="#fff"/><rect x="5" y="11" width="1" height="1" fill="#fff"/><rect x="6" y="11" width="1" height="1" fill="#fff"/><rect x="8" y="11" width="1" height="1" fill="#fff"/><rect x="10" y="12" width="1" height="1" fill="#fff"/><rect x="11" y="12" width="1" height="1" fill="#fff"/><rect x="3" y="14" width="1" height="1" fill="#fff"/><rect x="5" y="13" width="1" height="1" fill="#fff"/><rect x="6" y="13" width="1" height="1" fill="#fff"/><rect x="8" y="13" width="1" height="1" fill="#fff"/><rect x="9" y="14" width="1" height="1" fill="#fff"/><rect x="5" y="15" width="1" height="1" fill="#fff"/><rect x="7" y="15" width="1" height="1" fill="#fff"/><rect x="8" y="16" width="1" height="1" fill="#fff"/><rect x="7" y="16" width="1" height="1" fill="#fff"/><rect x="4" y="12" width="1" height="1" fill="#fff"/><rect x="7" y="12" width="1" height="1" fill="#fff"/><rect x="9" y="12" width="1" height="1" fill="#fff"/><rect x="1" y="12" width="1" height="1" fill="#f0a020"/><rect x="2" y="12" width="1" height="1" fill="#f0a020"/><rect x="3" y="11" width="1" height="1" fill="#f0a020"/><rect x="12" y="12" width="1" height="1" fill="#f0a020"/><rect x="13" y="12" width="1" height="1" fill="#f0a020"/><rect x="15" y="11" width="1" height="1" fill="#f0a020"/><rect x="14" y="10" width="1" height="1" fill="#f0a020"/></svg><div class="t" style="left:19px;top:7px;font-size:11px;color:#fff;font-weight:bold">Oscilloscope-XSC1</div><div class="bt" style="left:534px;top:6px;width:16px;height:14px"><svg width="16" height="14" style="left:0;top:0"><path d="M4 3L11 10M11 3L4 10" stroke="#000" stroke-width="1.6"/></svg></div><div class="a" style="left:0px;top:24px;width:549px;height:1px;background:#808080"></div><div class="a" style="left:0px;top:24px;width:2px;height:289px;background:#808080"></div><div class="a" style="left:2px;top:25px;width:547px;height:287px;background:#000"></div><div class="a" style="left:549px;top:24px;width:2px;height:290px;background:#fff"></div><div class="a" style="left:0px;top:312px;width:551px;height:2px;background:#fff"></div><svg width="556" height="320" style="left:0;top:0" shape-rendering="crispEdges"><path d="M63.5 38V304" stroke="#e0e0e0" stroke-dasharray="3 3"/><path d="M116.5 38V304" stroke="#e0e0e0" stroke-dasharray="3 3"/><path d="M169.5 38V304" stroke="#e0e0e0" stroke-dasharray="3 3"/><path d="M222.5 38V304" stroke="#e0e0e0" stroke-dasharray="3 3"/><path d="M275.5 38V304" stroke="#e0e0e0" stroke-dasharray="3 3"/><path d="M329.5 38V304" stroke="#e0e0e0" stroke-dasharray="3 3"/><path d="M382.5 38V304" stroke="#e0e0e0" stroke-dasharray="3 3"/><path d="M435.5 38V304" stroke="#e0e0e0" stroke-dasharray="3 3"/><path d="M488.5 38V304" stroke="#e0e0e0" stroke-dasharray="3 3"/><path d="M10 79.5H541" stroke="#e0e0e0" stroke-dasharray="3 3"/><path d="M10 124.5H541" stroke="#e0e0e0" stroke-dasharray="3 3"/><path d="M10 214.5H541" stroke="#e0e0e0" stroke-dasharray="3 3"/><path d="M10 259.5H541" stroke="#e0e0e0" stroke-dasharray="3 3"/><path d="M10 34.5H541 M10 304.5H541" stroke="#fff"/><path d="M10 169.5H541" stroke="#fff"/><path d="M21.5 168V172M31.5 168V172M42.5 168V172M52.5 168V172M63.5 168V172M74.5 168V172M84.5 168V172M95.5 168V172M106.5 168V172M116.5 168V172M127.5 168V172M137.5 168V172M148.5 168V172M159.5 168V172M169.5 168V172M180.5 168V172M191.5 168V172M201.5 168V172M212.5 168V172M222.5 168V172M233.5 168V172M244.5 168V172M254.5 168V172M265.5 168V172M275.5 168V172M286.5 168V172M297.5 168V172M307.5 168V172M318.5 168V172M329.5 168V172M339.5 168V172M350.5 168V172M360.5 168V172M371.5 168V172M382.5 168V172M392.5 168V172M403.5 168V172M414.5 168V172M424.5 168V172M435.5 168V172M445.5 168V172M456.5 168V172M467.5 168V172M477.5 168V172M488.5 168V172M499.5 168V172M509.5 168V172M520.5 168V172M530.5 168V172" stroke="#fff"/><path d="M10.0 168 L36.5 57.5 L63.1 168 L89.7 57.5 L116.2 168 L142.8 57.5 L169.3 168 L195.8 57.5 L222.4 168 L249.0 57.5 L275.5 168 L302.1 57.5" stroke="#ff0000" fill="none" stroke-width="1.3"/><path d="M10.0 158 L36.5 114 L63.1 158 L89.7 114 L116.2 158 L142.8 114 L169.3 158 L195.8 114 L222.4 158 L249.0 114 L275.5 158 L302.1 114" stroke="#ff0000" fill="none" stroke-width="1.3"/><rect x="10" y="34" width="1" height="271" fill="#ff0000"/><rect x="541" y="34" width="1" height="271" fill="#0000ff"/><rect x="10" y="157" width="1" height="2" fill="#00ff00"/><rect x="10" y="167" width="1" height="2" fill="#00ff00"/><path d="M4 28h13l-6.5 6.5z" fill="#00ffff" shape-rendering="auto"/><rect x="9" y="29" width="2" height="3" fill="#000"/><path d="M535 28h13l-6.5 6.5z" fill="#ffff00" shape-rendering="auto"/><path d="M540 29h2v1h-1v1h1v1h-2" stroke="#000" stroke-width="0.7" fill="none"/></svg><div class="a" style="left:0px;top:316px;width:552px;height:12px;background:#d4d0c8"></div><div class="bt" style="left:0px;top:316px;width:14px;height:12px;"><svg width="14" height="12" style="left:0;top:0"><path d="M4 6l3-3v6z" fill="#000"/></svg></div><div class="bt" style="left:14px;top:316px;width:521px;height:12px;"></div><div class="bt" style="left:535px;top:316px;width:16px;height:12px;"><svg width="16" height="12" style="left:0;top:0"><path d="M10 6l-3-3v6z" fill="#000"/></svg></div><div class="a" style="left:0;top:332px;width:59px;height:58px;box-shadow:inset 1px 1px #fff,inset -1px -1px #808080"></div><div class="a" style="left:0px;top:390px;width:59px;height:1px;background:#fff"></div><div class="t" style="left:5px;top:340px;font-size:11px;color:#000;">T1</div><div class="t" style="left:5px;top:357px;font-size:11px;color:#000;">T2</div><div class="t" style="left:5px;top:376px;font-size:11px;color:#000;">T2-T1</div><div class="bt" style="left:24px;top:338px;width:15px;height:18px"><svg width="15" height="18" style="left:0;top:0"><path d="M4 8.5l5-4.7v9.4z M9 7h4v3h-4z" fill="#000"/></svg></div><div class="bt" style="left:41px;top:338px;width:15px;height:18px"><svg width="15" height="18" style="left:0;top:0"><path d="M12 8.5l-5-4.7v9.4z M3 7h4v3h-4z" fill="#000"/></svg></div><div class="bt" style="left:24px;top:356px;width:15px;height:17px"><svg width="15" height="17" style="left:0;top:0"><path d="M4 8.5l5-4.7v9.4z M9 7h4v3h-4z" fill="#000"/></svg></div><div class="bt" style="left:41px;top:356px;width:15px;height:17px"><svg width="15" height="17" style="left:0;top:0"><path d="M12 8.5l-5-4.7v9.4z M3 7h4v3h-4z" fill="#000"/></svg></div><div class="a" style="left:60px;top:332px;width:323px;height:56px;background:#fff;box-shadow:inset 1px 1px #808080,inset 2px 2px #404040,inset -1px -1px #d4d0c8"></div><div class="t" style="left:84px;top:335px;font-size:11px;color:#000;">Time</div><div class="t" style="left:75px;top:348px;font-size:11px;color:#000;">0.000 s</div><div class="t" style="left:149px;top:335px;font-size:11px;color:#000;">Channel_A</div><div class="t" style="left:146px;top:348px;font-size:11px;color:#000;">500.000 mV</div><div class="t" style="left:229px;top:335px;font-size:11px;color:#000;">Channel_B</div><div class="t" style="left:229px;top:348px;font-size:11px;color:#000;">44.551 mV</div><div class="bt" style="left:389px;top:338px;width:63px;height:24px;box-shadow:inset 0 0 0 1px #000,inset -2px -2px #404040,inset 2px 2px #fff,inset -3px -3px #808080;line-height:23px;font-size:11px">Reverse</div><div class="bt" style="left:389px;top:365px;width:63px;height:23px;line-height:22px;font-size:11px">Save</div><div class="t" style="left:460px;top:381px;font-size:11px;color:#000;">Ext. Trigger</div><svg width="14" height="14" style="left:522px;top:381px"><circle cx="6" cy="6" r="5" fill="none" stroke="#808080" stroke-dasharray="16 16" stroke-dashoffset="-4"/><circle cx="6" cy="6" r="5" fill="none" stroke="#fff" stroke-dasharray="0 18 14" /></svg><div class="a" style="left:-1px;top:404px;width:128px;height:73px;border:1px solid #808080;box-shadow:1px 1px #fff,inset 1px 1px #fff"></div><div class="t" style="left:6px;top:399px;padding:0 2px;background:#d4d0c8;font-size:11px;line-height:12px">Timebase</div><div class="a" style="left:128px;top:404px;width:119px;height:73px;border:1px solid #808080;box-shadow:1px 1px #fff,inset 1px 1px #fff"></div><div class="t" style="left:134px;top:399px;padding:0 2px;background:#d4d0c8;font-size:11px;line-height:12px">Channel A</div><div class="a" style="left:248px;top:404px;width:126px;height:73px;border:1px solid #808080;box-shadow:1px 1px #fff,inset 1px 1px #fff"></div><div class="t" style="left:254px;top:399px;padding:0 2px;background:#d4d0c8;font-size:11px;line-height:12px">Channel B</div><div class="a" style="left:375px;top:404px;width:175px;height:73px;border:1px solid #808080;box-shadow:1px 1px #fff,inset 1px 1px #fff"></div><div class="t" style="left:382px;top:399px;padding:0 2px;background:#d4d0c8;font-size:11px;line-height:12px">Trigger</div><div class="t" style="left:6px;top:418px;font-size:11px;color:#000;">Scale</div><div class="ed" style="left:38px;top:411px;width:84px;height:19px"><div class="t" style="left:5px;top:6px;font-size:11px">10 ms/Div</div></div><div class="t" style="left:6px;top:437px;font-size:11px;color:#000;">X position</div><div class="ed" style="left:60px;top:432px;width:62px;height:20px"><div class="t" style="left:5px;top:6px;font-size:11px">0</div></div><div class="bp" style="left:6px;top:455px;width:25px;height:20px;line-height:18px;font-size:11px;color:#000;">Y/T</div><div class="bt" style="left:32px;top:455px;width:27px;height:20px;line-height:18px;font-size:11px;color:#000;">Add</div><div class="bt" style="left:60px;top:455px;width:29px;height:20px;line-height:18px;font-size:11px;color:#000;">B/A</div><div class="bt" style="left:89px;top:455px;width:28px;height:20px;line-height:18px;font-size:11px;color:#000;">A/B</div><div class="t" style="left:131px;top:418px;font-size:11px;color:#000;">Scale</div><div class="ed" style="left:161px;top:411px;width:84px;height:19px"><div class="t" style="left:5px;top:6px;font-size:11px">2&nbsp; V/Div</div></div><div class="t" style="left:131px;top:437px;font-size:11px;color:#000;">Y position</div><div class="ed" style="left:183px;top:432px;width:62px;height:20px"><div class="t" style="left:5px;top:6px;font-size:11px">0</div></div><div class="bt" style="left:131px;top:455px;width:24px;height:20px;line-height:18px;font-size:11px;color:#000;">AC</div><div class="bt" style="left:155px;top:455px;width:24px;height:20px;line-height:18px;font-size:11px;color:#000;">0</div><div class="bp" style="left:179px;top:455px;width:25px;height:20px;line-height:18px;font-size:11px;color:#000;">DC</div><svg width="14" height="14" style="left:228px;top:457px"><circle cx="6" cy="6" r="5" fill="none" stroke="#808080" stroke-dasharray="16 16" stroke-dashoffset="-4"/><circle cx="6" cy="6" r="5" fill="none" stroke="#fff" stroke-dasharray="0 18 14" /><circle cx="6" cy="6" r="2" fill="#808080"/></svg><div class="t" style="left:251px;top:418px;font-size:11px;color:#000;">Scale</div><div class="ed" style="left:285px;top:411px;width:87px;height:19px"><div class="t" style="left:5px;top:6px;font-size:11px">2&nbsp; V/Div</div></div><div class="t" style="left:251px;top:437px;font-size:11px;color:#000;">Y position</div><div class="ed" style="left:308px;top:432px;width:64px;height:20px"><div class="t" style="left:5px;top:6px;font-size:11px">0</div></div><div class="bt" style="left:252px;top:456px;width:24px;height:20px;line-height:18px;font-size:11px;color:#000;">AC</div><div class="bt" style="left:276px;top:456px;width:23px;height:20px;line-height:18px;font-size:11px;color:#000;">0</div><div class="bp" style="left:299px;top:456px;width:27px;height:20px;line-height:18px;font-size:11px;color:#000;">DC</div><div class="bt" style="left:326px;top:456px;width:19px;height:20px;line-height:18px;font-size:11px;color:#000;">-</div><svg width="14" height="14" style="left:359px;top:458px"><circle cx="6" cy="6" r="5" fill="none" stroke="#808080" stroke-dasharray="16 16" stroke-dashoffset="-4"/><circle cx="6" cy="6" r="5" fill="none" stroke="#fff" stroke-dasharray="0 18 14" /><circle cx="6" cy="6" r="2" fill="#808080"/></svg><div class="t" style="left:379px;top:419px;font-size:11px;color:#000;">Edge</div><div class="t" style="left:379px;top:438px;font-size:11px;color:#000;">Level</div><div class="t" style="left:379px;top:460px;font-size:11px;color:#000;">Type</div><div class="bp" style="left:420px;top:414px;width:21px;height:18px;line-height:16px;font-size:11px;color:#000;"></div><div class="bt" style="left:441px;top:414px;width:23px;height:18px;line-height:16px;font-size:11px;color:#000;"></div><svg width="50" height="20" style="left:420px;top:414px" shape-rendering="crispEdges"><path d="M5 12.5h4.5v-7h4.5" stroke="#000" stroke-width="1.2" fill="none"/><path d="M7 10l2.5-2.5l2.5 2.5" stroke="#000" fill="none" shape-rendering="auto"/><path d="M27 4.5h4.5v7h5" stroke="#000" stroke-width="1.2" fill="none"/><path d="M29 7l2.5 2.5l2.5-2.5" stroke="#000" fill="none" shape-rendering="auto"/></svg><div class="bp" style="left:467px;top:414px;width:24px;height:20px;line-height:18px;font-size:11px;color:#808080;text-shadow:1px 1px #fff;">A</div><div class="bt" style="left:491px;top:414px;width:24px;height:20px;line-height:18px;font-size:11px;color:#808080;text-shadow:1px 1px #fff;">B</div><div class="bt" style="left:515px;top:414px;width:29px;height:20px;line-height:18px;font-size:11px;color:#808080;text-shadow:1px 1px #fff;">Ext</div><div class="ed" style="left:420px;top:436px;width:90px;height:18px"><div class="t" style="left:5px;top:5px;font-size:11px">0</div></div><div class="ed" style="left:510px;top:436px;width:33px;height:18px"><div class="t" style="left:5px;top:5px;font-size:11px">V</div></div><div class="bt" style="left:410px;top:455px;width:33px;height:20px;line-height:18px;font-size:11px;color:#000;">Sing.</div><div class="bt" style="left:444px;top:455px;width:32px;height:20px;line-height:18px;font-size:11px;color:#000;">Nor.</div><div class="bt" style="left:477px;top:455px;width:32px;height:20px;line-height:18px;font-size:11px;color:#000;">Auto</div><div class="bp" style="left:510px;top:455px;width:35px;height:20px;line-height:18px;font-size:11px;color:#000;">None</div></div>
</body></html>
